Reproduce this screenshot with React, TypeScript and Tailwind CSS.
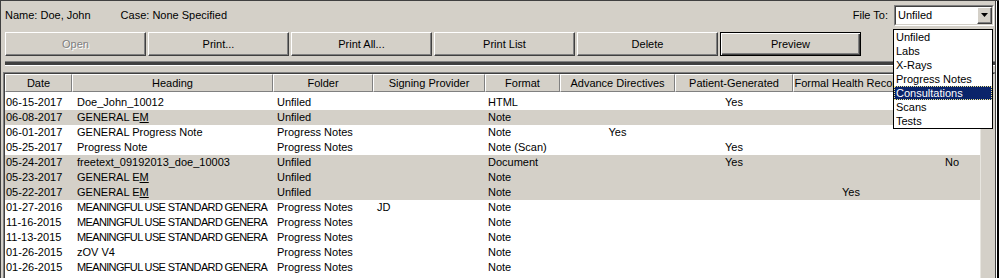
import React from "react";

const cols = [
  { label: "Date", w: 67, cls: "pl-[1px]" },
  { label: "Heading", w: 201, cls: "pl-[5px]" },
  { label: "Folder", w: 100, cls: "pl-[4px]" },
  { label: "Signing Provider", w: 112, cls: "pl-[4px]" },
  { label: "Format", w: 75, cls: "pl-[3px]" },
  { label: "Advance Directives", w: 115, cls: "text-center" },
  { label: "Patient-Generated", w: 118, cls: "text-center" },
  { label: "Formal Health Records", w: 116, cls: "text-center" },
  { label: "Archived", w: 86, cls: "text-center" },
];

const GEM = (
  <>
    GENERAL E<u>M</u>
  </>
);

// caps run wider in Liberation Sans than in the original UI font
const MU = <span className="tracking-[-0.65px]">MEANINGFUL USE STANDARD GENERA</span>;

const rows: { cells: React.ReactNode[]; gray?: boolean }[] = [
  { cells: ["06-15-2017", "Doe_John_10012", "Unfiled", "", "HTML", "", "Yes", "", ""] },
  { cells: ["06-08-2017", GEM, "Unfiled", "", "Note", "", "", "", ""], gray: true },
  { cells: ["06-01-2017", "GENERAL Progress Note", "Progress Notes", "", "Note", "Yes", "", "", ""] },
  { cells: ["05-25-2017", "Progress Note", "Progress Notes", "", "Note (Scan)", "", "Yes", "", ""] },
  { cells: ["05-24-2017", "freetext_09192013_doe_10003", "Unfiled", "", "Document", "", "Yes", "", "No"], gray: true },
  { cells: ["05-23-2017", GEM, "Unfiled", "", "Note", "", "", "", ""], gray: true },
  { cells: ["05-22-2017", GEM, "Unfiled", "", "Note", "", "", "Yes", ""], gray: true },
  { cells: ["01-27-2016", MU, "Progress Notes", "JD", "Note", "", "", "", ""] },
  { cells: ["11-16-2015", MU, "Progress Notes", "", "Note", "", "", "", ""] },
  { cells: ["11-13-2015", MU, "Progress Notes", "", "Note", "", "", "", ""] },
  { cells: ["01-26-2015", "zOV V4", "Progress Notes", "", "Note", "", "", "", ""] },
  { cells: ["01-26-2015", MU, "Progress Notes", "", "Note", "", "", "", ""] },
];

const fileTo = ["Unfiled", "Labs", "X-Rays", "Progress Notes", "Consultations", "Scans", "Tests"];

function WinButton({ label, disabled, isDefault }: { label: string; disabled?: boolean; isDefault?: boolean }) {
  if (isDefault) {
    return (
      <div className="w-[141px] h-[24px] border border-black flex items-center justify-center shadow-[inset_1px_1px_0_#fff,inset_-1px_-1px_0_#404040,inset_-2px_-2px_0_#808080]">
        {label}
      </div>
    );
  }
  return (
    <div className="w-[141px] h-[24px] border border-t-white border-l-white border-b-[#404040] border-r-[#404040] flex items-center justify-center shadow-[inset_-1px_-1px_0_#808080]">
      {disabled ? <span className="text-[#808080] [text-shadow:1px_1px_0_#fff]">{label}</span> : label}
    </div>
  );
}

export default function App() {
  return (
    <div className="relative w-[999px] h-[278px] overflow-hidden bg-[#d4d0c8] border-t border-l border-[#404040] font-['Liberation_Sans',Arial,sans-serif] text-[11px] text-black">
      {/* top bar */}
      <div className="h-[31px] flex items-center">
        <span className="ml-[4px] pb-[3px]">Name: Doe, John</span>
        <span className="ml-[30px] pb-[3px]">Case: None Specified</span>
        <span className="ml-auto mr-[6px] pb-[3px]">File To:</span>
        <div className="mr-[5px] mb-[3px] w-[100px] h-[21px] border border-t-[#808080] border-l-[#808080] border-b-white border-r-white">
          <div className="h-full border border-t-[#404040] border-l-[#404040] border-b-[#d4d0c8] border-r-[#d4d0c8] bg-white flex items-center">
            <span className="pl-[2px] flex-1">Unfiled</span>
            <div className="w-[15px] h-[17px] bg-[#d4d0c8] border border-t-white border-l-white border-b-[#404040] border-r-[#404040] shadow-[inset_-1px_-1px_0_#808080] flex items-center justify-center">
              <svg width="7" height="4" viewBox="0 0 7 4">
                <path d="M0 0h7L3.5 4z" fill="#000" />
              </svg>
            </div>
          </div>
        </div>
      </div>

      {/* buttons */}
      <div className="flex gap-[2px] ml-[4px]">
        <WinButton label="Open" disabled />
        <WinButton label="Print..." />
        <WinButton label="Print All..." />
        <WinButton label="Print List" />
        <WinButton label="Delete" />
        <WinButton label="Preview" isDefault />
      </div>

      {/* splitter */}
      <div className="ml-[4px] mr-[3px] mt-[5px] h-[4px] border-t border-[#808080] bg-[#404040]" />
      <div className="h-[7px] border-t border-white ml-[4px] mr-[3px]" />

      {/* table */}
      <div className="ml-[2px] mr-[3px] h-[220px] flex border border-t-[#808080] border-l-[#808080] border-r-white border-b-white">
        <div className="flex-1 flex border border-t-[#404040] border-l-[#404040] border-r-[#d4d0c8] border-b-[#d4d0c8] overflow-hidden">
          <div className="w-[976px] overflow-hidden bg-white">
            <div className="flex h-[18px] bg-[#d4d0c8]">
              {cols.map((c) => (
                <div
                  key={c.label}
                  style={{ width: c.w }}
                  className="shrink-0 h-full border-t border-l border-t-white border-l-white border-b border-r border-b-[#808080] border-r-[#808080] flex items-center justify-center whitespace-nowrap overflow-hidden"
                >
                  {c.label}
                </div>
              ))}
            </div>
            <div className="pt-[3px]">
              {rows.map((r, i) => (
                <div key={i} className={`flex h-[15px] items-center ${r.gray ? "bg-[#d4d0c8]" : "bg-white"}`}>
                  {r.cells.map((cell, j) => (
                    <div
                      key={j}
                      style={{ width: cols[j].w }}
                      className={`shrink-0 whitespace-nowrap overflow-hidden ${cols[j].cls}`}
                    >
                      {cell}
                    </div>
                  ))}
                </div>
              ))}
            </div>
          </div>
          <div className="w-[14px] bg-[#d4d0c8] border-l border-[#e8e6e0]" />
        </div>
      </div>

      {/* right window edge */}
      <div className="absolute top-0 right-0 h-full w-[4px] flex">
        <div className="w-[1px] bg-[#404040]" />
        <div className="w-[1px] bg-white" />
        <div className="w-[2px] bg-black" />
      </div>

      {/* open dropdown list */}
      <div className="absolute left-[892px] top-[28px] w-[100px] h-[100px] bg-white border border-black">
        {fileTo.map((f) =>
          f === "Consultations" ? (
            <div key={f} className="h-[14px] leading-[12px] pl-[1px] bg-[#0a246a] text-white border border-dotted border-[#f0e68c]">
              {f}
            </div>
          ) : (
            <div key={f} className="h-[14px] leading-[14px] pl-[2px]">
              {f}
            </div>
          )
        )}
      </div>
    </div>
  );
}
